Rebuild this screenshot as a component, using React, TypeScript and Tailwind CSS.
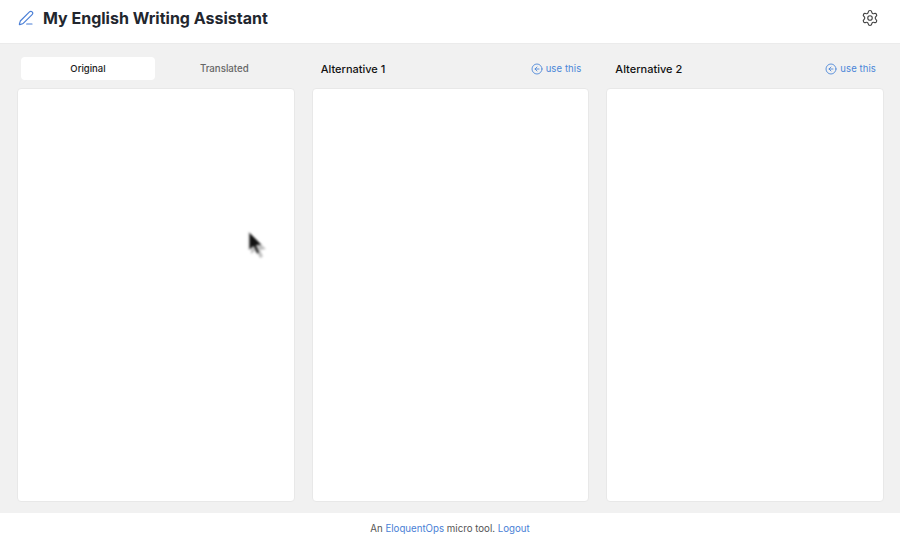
import { CircleArrowLeft, PenLine, Settings } from "lucide-react";

function UseThis() {
  return (
    <a className="flex items-center gap-[3px] text-[9.5px] tracking-[0.1px] text-[#4a86d8]">
      <CircleArrowLeft className="h-[12px] w-[12px]" strokeWidth={1.75} />
      use this
    </a>
  );
}

function Column({ title }: { title: string }) {
  return (
    <div className="flex flex-col">
      <div className="mb-[8px] mt-[13px] flex h-[23px] items-center justify-between pl-[9px] pr-[8px] pt-[1px]">
        <span className="text-[11px] font-medium text-[#111]">{title}</span>
        <UseThis />
      </div>
      <div className="flex-1 rounded-[4px] border border-[#e8e8e8] bg-white" />
    </div>
  );
}

export default function App() {
  return (
    <div className="flex h-[538px] w-[900px] flex-col overflow-hidden bg-[#f1f1f1] font-['Inter',sans-serif]">
      <header className="flex h-[44px] shrink-0 items-center justify-between border-b border-[#ebebeb] bg-white pb-[8px] pl-[18px] pr-[21px]">
        <div className="flex items-center gap-[9px]">
          <PenLine className="h-[16px] w-[16px] text-[#4a7fd6]" strokeWidth={1.75} />
          <h1 className="text-[16px] font-bold text-[#22262e]">My English Writing Assistant</h1>
        </div>
        <Settings className="h-[18px] w-[18px] text-[#444]" strokeWidth={1.5} />
      </header>

      <main className="relative grid flex-1 grid-cols-3 gap-[17px] pb-[11px] pl-[17px] pr-[16px]">
        <div className="flex flex-col">
          <div className="mb-[8px] mt-[13px] flex h-[23px] items-center pl-[4px] pr-[3px]">
            <div className="flex h-[23px] w-[134px] items-center justify-center rounded-[4px] bg-white pt-[2px] text-[9.5px] font-medium text-[#222]">
              Original
            </div>
            <div className="flex h-[23px] flex-1 items-center justify-center pl-[2px] pt-[2px] text-[9.7px] font-medium text-[#666]">
              Translated
            </div>
          </div>
          <div className="flex-1 rounded-[4px] border border-[#e8e8e8] bg-white" />
        </div>
        <Column title="Alternative 1" />
        <Column title="Alternative 2" />

        {/* mouse pointer from the capture */}
        <svg className="absolute left-[246px] top-[186px] blur-[0.8px]" width="22" height="30" viewBox="0 0 22 30">
          <path d="M4 3 L4 22 L9 18 L13 26 L16 24.5 L13 18 L19 17 Z" fill="#000" fillOpacity="0.25" transform="translate(1 2)" />
          <path d="M3 2 L3 20 L7.5 16.5 L11 24 L13.5 22.5 L10.5 15.5 L16 15 Z" fill="#111" stroke="#ccc" strokeWidth="1" />
        </svg>
      </main>

      <footer className="flex h-[25px] shrink-0 items-center justify-center bg-white pt-[8px] text-[9.7px] text-[#555]">
        <span>
          An <a className="text-[#4a7fd6]">EloquentOps</a> micro tool. <a className="text-[#4a7fd6]">Logout</a>
        </span>
      </footer>
    </div>
  );
}
